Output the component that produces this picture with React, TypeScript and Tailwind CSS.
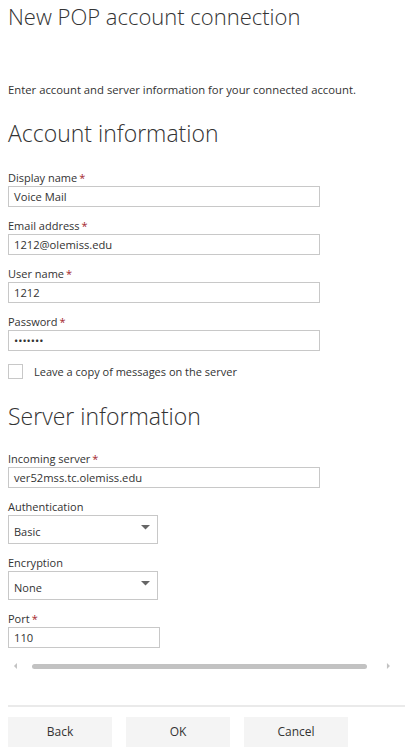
import React from "react";

function Label({ text, required }: { text: string; required?: boolean }) {
  return (
    <div className="text-[11px] leading-[16px] text-[#333]">
      {text}
      {required && <span className="text-[#a4262c] ml-[2px]">*</span>}
    </div>
  );
}

function TextField({ label, value, width = "w-[312px]", mt = "mt-[11px]" }: { label: string; value: string; width?: string; mt?: string }) {
  return (
    <div className={mt}>
      <Label text={label} required />
      <div className={`${width} h-[21px] border border-[#c8c8c8] px-[5px] text-[11.2px] leading-[19px] text-[#333]`}>{value}</div>
    </div>
  );
}

function SelectField({ label, value }: { label: string; value: string }) {
  return (
    <div className="mt-[11px]">
      <Label text={label} />
      <div className="w-[150px] h-[29px] border border-[#c8c8c8] flex justify-between pl-[5px] pr-[7px] text-[11px] text-[#333]">
        <span className="pt-[8px] leading-[16px]">{value}</span>
        <svg className="mt-[9px]" width="9" height="5" viewBox="0 0 9 5">
          <path d="M0 0 L9 0 L4.5 4.5 Z" fill="#666" />
        </svg>
      </div>
    </div>
  );
}

export default function App() {
  return (
    <div className="w-[405px] h-[754px] bg-white overflow-hidden font-['Open_Sans',sans-serif] text-[#333]">
      <div className="px-2">
        <h1 className="text-[22px] font-light leading-[28px] pt-[2px] text-[#333]">New POP account connection</h1>
        <p className="mt-[52px] text-[11.3px] leading-[16px]">Enter account and server information for your connected account.</p>
        <h2 className="mt-[19px] text-[23px] font-light leading-[32px] text-[#333]">Account information</h2>
        <TextField label="Display name" value="Voice Mail" mt="mt-[21px]" />
        <TextField label="Email address" value="1212@olemiss.edu" />
        <TextField label="User name" value="1212" />
        <TextField label="Password" value="•••••••" />
        <div className="mt-[13px] flex items-center">
          <div className="w-[15px] h-[15px] border border-[#c8c8c8]" />
          <span className="ml-[11px] text-[11px] leading-[15px]">Leave a copy of messages on the server</span>
        </div>
        <h2 className="mt-[21px] text-[23px] font-light leading-[32px] text-[#333]">Server information</h2>
        <TextField label="Incoming server" value="ver52mss.tc.olemiss.edu" mt="mt-[19px]" />
        <SelectField label="Authentication" value="Basic" />
        <SelectField label="Encryption" value="None" />
        <TextField label="Port" value="110" width="w-[152px]" />
        <div className="mt-[13px] h-[10px] flex items-center">
          <svg width="16" height="10" viewBox="0 0 16 10">
            <path d="M9 2 L6 5 L9 8 Z" fill="#c2c2c2" />
          </svg>
          <div className="ml-[8px] w-[337px] h-[5px] rounded-full bg-[#c2c2c2]" />
          <svg className="ml-[14px]" width="16" height="10" viewBox="0 0 16 10">
            <path d="M6 2 L9 5 L6 8 Z" fill="#c2c2c2" />
          </svg>
        </div>
      </div>
      <div className="mt-[34px] ml-2 h-[2px] bg-[#eaeaea]" />
      <div className="mt-[10px] px-2 flex gap-[14px]">
        <button className="w-[104px] h-[30px] bg-[#f4f4f4] text-[12px] text-[#333]">Back</button>
        <button className="w-[104px] h-[30px] bg-[#f4f4f4] text-[12px] text-[#333]">OK</button>
        <button className="w-[104px] h-[30px] bg-[#f4f4f4] text-[12px] text-[#333]">Cancel</button>
      </div>
    </div>
  );
}
